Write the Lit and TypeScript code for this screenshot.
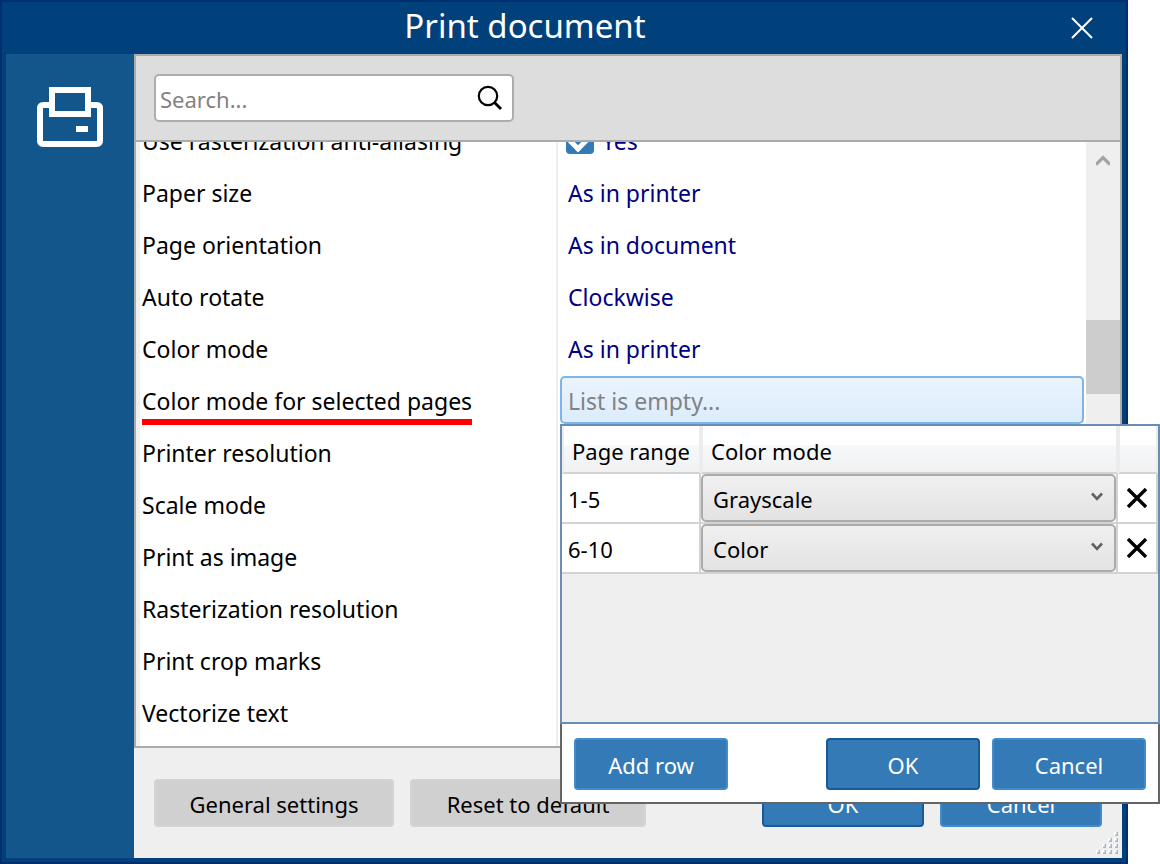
import { LitElement, html, css, svg, nothing } from "lit";
import { customElement, state } from "lit/decorators.js";

interface Setting {
  label: string;
  value?: string;
  kind?: "check" | "list";
}

interface RangeRow {
  range: string;
  mode: string;
}

const SETTINGS: Setting[] = [
  { label: "Use rasterization anti-aliasing", value: "Yes", kind: "check" },
  { label: "Paper size", value: "As in printer" },
  { label: "Page orientation", value: "As in document" },
  { label: "Auto rotate", value: "Clockwise" },
  { label: "Color mode", value: "As in printer" },
  { label: "Color mode for selected pages", value: "List is empty...", kind: "list" },
  { label: "Printer resolution" },
  { label: "Scale mode" },
  { label: "Print as image" },
  { label: "Rasterization resolution" },
  { label: "Print crop marks" },
  { label: "Vectorize text" },
];

const base = css`
  * {
    box-sizing: border-box;
  }
  button,
  input,
  select {
    font: inherit;
    color: inherit;
    margin: 0;
  }
  svg {
    display: block;
  }
  .btn {
    border: 2px solid #428bca;
    border-radius: 4px;
    background: #347ab7;
    color: #fff;
    padding: 0;
    text-align: center;
  }
  .btn.primary {
    border-color: #165b97;
  }
  .btn.plain {
    background: #d0d0d0;
    border-color: #d3d3d3;
    color: #000;
  }
`;

@customElement("range-popup")
export class RangePopup extends LitElement {
  @state() private rows: RangeRow[] = [
    { range: "1-5", mode: "Grayscale" },
    { range: "6-10", mode: "Color" },
  ];

  static styles = [
    base,
    css`
      :host {
        display: flex;
        flex-direction: column;
      }
      .grid {
        flex: 1;
        border: 2px solid #6a8db3;
        background: #efefef;
      }
      table {
        width: 100%;
        border-collapse: separate;
        border-spacing: 0;
        table-layout: fixed;
      }
      .c-range {
        width: 139px;
      }
      .c-del {
        width: 40px;
      }
      th {
        height: 48px;
        padding: 4px 0 0 8px;
        font-weight: 400;
        text-align: left;
        white-space: nowrap;
        border: 0 solid #ececec;
        border-width: 0 2px 2px;
        border-bottom-color: #d3d3d3;
        background: linear-gradient(#fff 0 42%, #f7f8fa 42%, #f0f1f2);
      }
      td {
        height: 50px;
        padding: 0;
        background: #fff;
        border-bottom: 2px solid #d3d3d3;
        border-right: 2px solid #d3d3d3;
      }
      .range {
        padding: 2px 0 0 6px;
      }
      .combo {
        position: relative;
      }
      select {
        display: block;
        width: 100%;
        height: 48px;
        padding: 2px 40px 0 10px;
        appearance: none;
        border: 2px solid #ababab;
        border-radius: 5px;
        background: linear-gradient(#f0f0f0, #e3e3e3);
        outline: none;
      }
      .combo svg {
        position: absolute;
        right: 13px;
        top: 17px;
        pointer-events: none;
      }
      .del {
        display: grid;
        place-items: center;
        width: 100%;
        height: 48px;
        padding: 0;
        border: 0;
        background: none;
      }
      .actions {
        display: flex;
        gap: 12px;
        padding: 14px 12px 12px;
        border: 2px solid #646464;
        border-top: 0;
        background: #fff;
      }
      .btn {
        width: 154px;
        height: 52px;
        padding-top: 2px;
      }
      .add {
        margin-right: auto;
      }
    `,
  ];

  private addRow() {
    this.rows = [...this.rows, { range: "", mode: "Color" }];
  }

  private removeRow(index: number) {
    this.rows = this.rows.filter((_, i) => i !== index);
  }

  render() {
    return html`
      <div class="grid">
        <table>
          <colgroup>
            <col class="c-range" />
            <col />
            <col class="c-del" />
          </colgroup>
          <thead>
            <tr>
              <th>Page range</th>
              <th>Color mode</th>
              <th></th>
            </tr>
          </thead>
          <tbody>
            ${this.rows.map(
              (row, i) => html`<tr>
                <td class="range">${row.range}</td>
                <td>
                  <div class="combo">
                    <select aria-label="Color mode">
                      ${["Grayscale", "Color"].map(
                        (m) => html`<option ?selected=${m === row.mode}>${m}</option>`
                      )}
                    </select>
                    <svg width="12" height="12" viewBox="0 0 12 12">
                      <path d="M1 2.5 6 7.8 11 2.5" fill="none" stroke="#606060" stroke-width="2.6" />
                    </svg>
                  </div>
                </td>
                <td>
                  <button class="del" aria-label="Delete row" @click=${() => this.removeRow(i)}>
                    <svg width="20" height="20" viewBox="0 0 20 20">
                      <path d="M1 1 19 19M19 1 1 19" stroke="#000" stroke-width="3.4" />
                    </svg>
                  </button>
                </td>
              </tr>`
            )}
          </tbody>
        </table>
      </div>
      <div class="actions">
        <button class="btn add" @click=${this.addRow}>Add row</button>
        <button class="btn primary">OK</button>
        <button class="btn">Cancel</button>
      </div>
    `;
  }
}

@customElement("app-root")
export class AppRoot extends LitElement {
  static styles = [
    base,
    css`
      :host {
        display: block;
        position: relative;
        height: 100vh;
        padding-right: 32px;
        box-sizing: border-box;
        background: #fff;
        color: #000;
        font: 22px/30px "Noto Sans", "Open Sans", sans-serif;
        overflow: hidden;
      }
      .dialog {
        display: flex;
        flex-direction: column;
        height: 100%;
        border: 2px solid #002e6e;
        background: #00417c;
        padding: 0 4px 4px;
      }
      .titlebar {
        display: grid;
        grid-template-columns: 80px 1fr 80px;
        align-items: center;
        height: 52px;
        color: #fff;
      }
      h1 {
        grid-column: 2;
        margin: 0;
        padding: 0 78px 4px 0;
        font-size: 33px;
        line-height: 44px;
        font-weight: 400;
        text-align: center;
      }
      .close {
        display: grid;
        place-items: center;
        width: 80px;
        height: 52px;
        padding: 0;
        border: 0;
        background: none;
      }
      .body {
        flex: 1;
        min-height: 0;
        display: flex;
      }
      .side {
        width: 128px;
        padding: 32px 0 0 30px;
        background: #13568b;
      }
      main {
        flex: 1;
        min-width: 0;
        display: flex;
        flex-direction: column;
        background: #efefef;
      }
      .panel {
        flex: 1;
        min-height: 0;
        display: flex;
        flex-direction: column;
        border: 2px solid #ababab;
      }
      .toolbar {
        padding: 18px;
        background: #ddd;
        border-bottom: 2px solid #ababab;
      }
      .search {
        display: flex;
        align-items: center;
        width: 360px;
        height: 48px;
        padding: 0 9px 0 4px;
        border: 2px solid #abadb3;
        border-radius: 5px;
        background: #fff;
      }
      .search input {
        flex: 1;
        min-width: 0;
        padding: 2px 0 0;
        border: 0;
        outline: 0;
        background: none;
      }
      input::placeholder {
        color: #828282;
        opacity: 1;
      }
      .scroll {
        flex: 1;
        min-height: 0;
        display: flex;
        background: #fff;
      }
      .list {
        flex: 1;
        min-width: 0;
        overflow: hidden;
        border-left: 4px solid #f0f0f0;
        font-size: 23px;
      }
      .row {
        display: flex;
        height: 52px;
      }
      .row:last-child {
        height: 104px;
      }
      .name {
        width: 418px;
        padding: 10px 2px;
        border-right: 2px solid #eee;
        white-space: nowrap;
      }
      .value {
        flex: 1;
        min-width: 0;
        padding: 10px;
        color: #000080;
        white-space: nowrap;
      }
      .value.edit {
        padding: 0 2px 4px;
      }
      .marked {
        position: relative;
      }
      .marked::after {
        content: "";
        position: absolute;
        left: 0;
        right: 0;
        bottom: -8px;
        height: 6px;
        background: #f00;
      }
      .field {
        width: 100%;
        height: 48px;
        padding: 2px 6px 0;
        border: 2px solid #7eb4ea;
        border-radius: 5px;
        background: linear-gradient(#ebf4fc, #dcecfc);
        outline: 0;
      }
      .check {
        display: flex;
        align-items: flex-start;
        gap: 8px;
      }
      .check input {
        appearance: none;
        width: 28px;
        height: 28px;
        margin-left: -2px;
        border-radius: 4px;
        background: #347ab7;
        display: grid;
        place-items: center;
      }
      .check input::before {
        content: "";
        width: 16px;
        height: 9px;
        border: solid #fff;
        border-width: 0 0 5px 5px;
        transform: rotate(-45deg);
      }
      .bar {
        display: flex;
        flex-direction: column;
        align-items: center;
        width: 34px;
        padding-top: 13px;
        background: #efefef;
      }
      .thumb {
        width: 100%;
        height: 74px;
        margin-top: 153px;
        background: #cdcdcd;
      }
      footer {
        display: flex;
        gap: 16px;
        padding: 31px 20px;
      }
      footer .btn {
        width: 162px;
        height: 48px;
        padding-top: 2px;
      }
      footer .general {
        width: 240px;
      }
      footer .reset {
        width: 236px;
        margin-right: auto;
      }
      .grip {
        position: absolute;
        right: 42px;
        bottom: 10px;
      }
      range-popup {
        position: absolute;
        left: 560px;
        right: 0;
        top: 424px;
        height: 380px;
      }
    `,
  ];

  firstUpdated() {
    // Open with the list scrolled by half a row.
    this.renderRoot.querySelector(".list")!.scrollTop = 26;
  }

  private renderValue(s: Setting) {
    if (s.kind === "check") {
      return html`<div class="value">
        <label class="check"><input type="checkbox" checked />${s.value}</label>
      </div>`;
    }
    if (s.kind === "list") {
      return html`<div class="value edit">
        <input class="field" readonly aria-label=${s.label} placeholder=${s.value!} />
      </div>`;
    }
    return html`<div class="value">${s.value ?? nothing}</div>`;
  }

  render() {
    const dots: unknown[] = [];
    for (let r = 0; r < 4; r++) {
      for (let c = 3 - r; c < 4; c++) {
        dots.push(svg`<rect x=${c * 6} y=${r * 6} width="4" height="4" fill="#fff" />
          <path d=${`M${c * 6 + 1} ${r * 6 + 4}h3v-4h-1.5v2.5h-1.5z`} fill="#a9b4cc" />`);
      }
    }
    return html`
      <div class="dialog">
        <div class="titlebar">
          <h1>Print document</h1>
          <button class="close" aria-label="Close">
            <svg width="22" height="22" viewBox="0 0 22 22">
              <path d="M1 1 21 21M21 1 1 21" stroke="#fff" stroke-width="2" />
            </svg>
          </button>
        </div>
        <div class="body">
          <aside class="side">
            <svg width="68" height="62" viewBox="0 0 68 62" fill="none" stroke="#fff" stroke-width="6">
              <path d="M16 19H7.500Q4 19 4 22.500V54.500Q4 58 7.500 58H60.500Q64 58 64 54.500V22.500Q64 19 60.500 19H52" />
              <rect x="16" y="4" width="36" height="24" />
              <path d="M40 43H52" />
            </svg>
          </aside>
          <main>
            <div class="panel">
              <div class="toolbar">
                <div class="search">
                  <input type="text" aria-label="Search" placeholder="Search..." />
                  <svg width="28" height="28" viewBox="0 0 28 28" fill="none" stroke="#000" stroke-width="2.200">
                    <circle cx="13" cy="12" r="9.200" />
                    <path d="M19.500 18.500 26 25" stroke-width="2.800" />
                  </svg>
                </div>
              </div>
              <div class="scroll">
                <div class="list">
                  ${SETTINGS.map(
                    (s) => html`<div class="row">
                      <div class="name">
                        <span class=${s.kind === "list" ? "marked" : ""}>${s.label}</span>
                      </div>
                      ${this.renderValue(s)}
                    </div>`
                  )}
                </div>
                <div class="bar">
                  <svg width="14" height="12" viewBox="0 0 14 12">
                    <path d="M0 9.500 7 2.500 14 9.500" fill="none" stroke="#a3a3a3" stroke-width="3.200" />
                  </svg>
                  <div class="thumb"></div>
                </div>
              </div>
            </div>
            <footer>
              <button class="btn plain general">General settings</button>
              <button class="btn plain reset">Reset to default</button>
              <button class="btn primary">OK</button>
              <button class="btn">Cancel</button>
            </footer>
          </main>
        </div>
      </div>
      <svg class="grip" width="22" height="22" viewBox="0 0 22 22">${dots}</svg>
      <range-popup></range-popup>
    `;
  }
}
